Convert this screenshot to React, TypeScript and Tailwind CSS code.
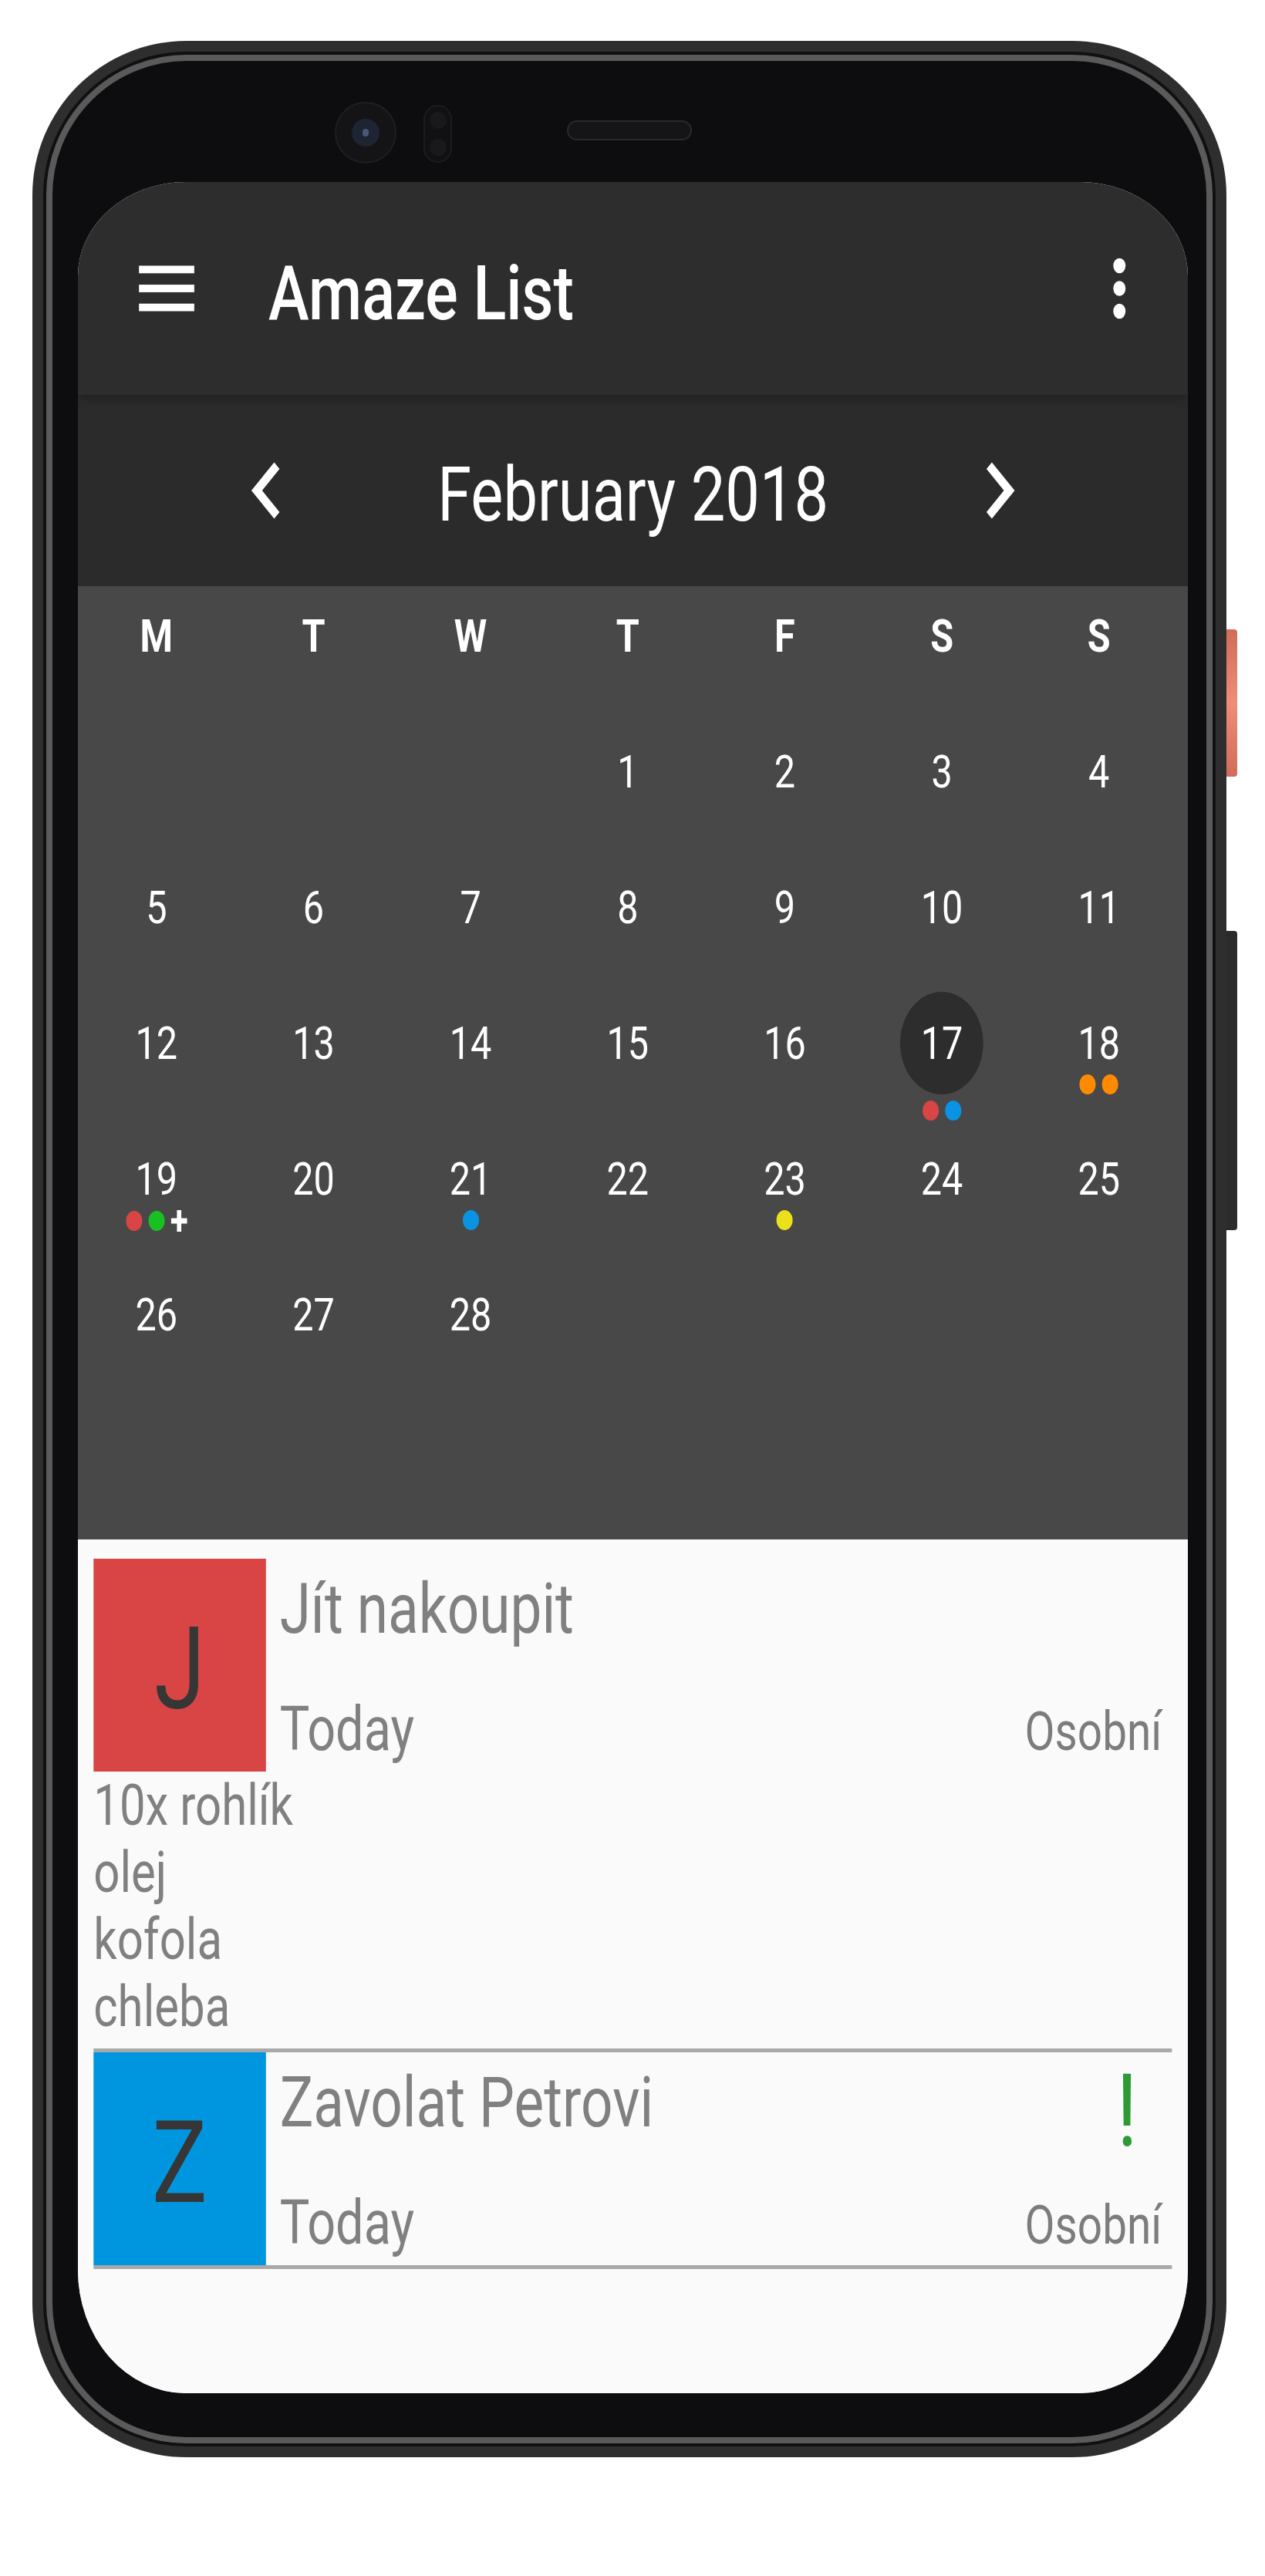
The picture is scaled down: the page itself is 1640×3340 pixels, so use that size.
import React from 'react'

type Day = { n?: number; dots?: string[]; plus?: boolean; selected?: boolean }

const weekdays = ['M', 'T', 'W', 'T', 'F', 'S', 'S']

const days: Day[] = [
  {}, {}, {}, { n: 1 }, { n: 2 }, { n: 3 }, { n: 4 },
  { n: 5 }, { n: 6 }, { n: 7 }, { n: 8 }, { n: 9 }, { n: 10 }, { n: 11 },
  { n: 12 }, { n: 13 }, { n: 14 }, { n: 15 }, { n: 16 },
  { n: 17, selected: true, dots: ['bg-[#d94545]', 'bg-[#0a93e2]'] },
  { n: 18, dots: ['bg-[#ff8a00]', 'bg-[#ff8a00]'] },
  { n: 19, dots: ['bg-[#d94545]', 'bg-[#19c022]'], plus: true },
  { n: 20 },
  { n: 21, dots: ['bg-[#0a93e2]'] },
  { n: 22 },
  { n: 23, dots: ['bg-[#ebe11b]'] },
  { n: 24 }, { n: 25 },
  { n: 26 }, { n: 27 }, { n: 28 }, {}, {}, {}, {},
]

const tasks = [
  {
    letter: 'J',
    square: 'bg-[#d94545]',
    title: 'Jít nakoupit',
    urgent: false,
    notes: ['10x rohlík', 'olej', 'kofola', 'chleba'],
  },
  {
    letter: 'Z',
    square: 'bg-[#0096df]',
    title: 'Zavolat Petrovi',
    urgent: true,
    notes: [],
  },
]

function Chevron({ dir }: { dir: 'left' | 'right' }) {
  return (
    <svg width="146" height="146" viewBox="0 0 24 24" fill="#fff">
      {dir === 'left' ? (
        <path d="M15.41 7.41L14 6l-6 6 6 6 1.41-1.41L10.83 12z" />
      ) : (
        <path d="M8.59 16.59L10 18l6-6-6-6-1.41 1.41L13.17 12z" />
      )}
    </svg>
  )
}

function DayCell({ d }: { d: Day }) {
  if (!d.n) return <div className="h-[176px]" />
  return (
    <div className="flex h-[176px] flex-col items-center">
      {d.selected ? (
        <div className="mt-[21px] flex h-[133px] w-[133px] shrink-0 items-center justify-center rounded-full bg-[#2d2d2d]">
          <span className="text-[60px] leading-none text-white">{d.n}</span>
        </div>
      ) : (
        <span className="mt-[58px] shrink-0 text-[60px] leading-none text-white">{d.n}</span>
      )}
      {d.dots && (
        <div className={`flex shrink-0 items-center gap-[10px] ${d.selected ? 'mt-[8px]' : 'mt-[10px]'}`}>
          {d.dots.map((c, i) => (
            <span key={i} className={`h-[26px] w-[26px] rounded-full ${c}`} />
          ))}
          {d.plus && (
            <svg width="26" height="28" viewBox="0 0 26 28">
              <rect x="0" y="10.5" width="26" height="7" fill="#fff" />
              <rect x="9.5" y="0" width="7" height="28" fill="#fff" />
            </svg>
          )}
        </div>
      )}
    </div>
  )
}

export default function App() {
  return (
    <div className="h-[3340px] w-[1640px] bg-white pl-[42px] pt-[53px]">
      {/* phone frame */}
      <div className="relative h-[3133px] w-[1548px] rounded-[200px] bg-[#2e2e2e] p-[14px]">
        <div className="absolute left-full top-[763px] h-[191px] w-[14px] rounded-r-[4px] bg-linear-to-b from-[#d06c58] via-[#ef8d77] to-[#d06c58]" />
        <div className="absolute left-full top-[1154px] h-[388px] w-[14px] rounded-r-[4px] bg-[#2b2b2b]" />
        <div className="h-full rounded-[186px] bg-[#101012] p-[4px]">
          <div className="h-full rounded-[182px] border-[8px] border-[#5a5a5a] bg-[#0d0d0f]">
            {/* top bezel */}
            <div className="flex h-[157px] items-start pl-[366px]">
              <div className="mt-[53px] flex h-[80px] w-[80px] items-center justify-center rounded-full border-2 border-[#1f1f22] bg-[#141416]">
                <div className="flex h-[36px] w-[36px] items-center justify-center rounded-full bg-[#1e2431]">
                  <div className="h-[10px] w-[8px] rounded-full bg-[#4a5878]" />
                </div>
              </div>
              <div className="ml-[35px] mt-[57px] flex h-[75px] w-[37px] flex-col items-center justify-around rounded-full border-2 border-[#1c1c1e] bg-[#111113]">
                <div className="h-[22px] w-[22px] rounded-full bg-[#19191b]" />
                <div className="h-[22px] w-[22px] rounded-full bg-[#19191b]" />
              </div>
              <div className="ml-[149px] mt-[77px] h-[26px] w-[162px] rounded-full border-2 border-[#2a2a2c] bg-[#151517]" />
            </div>

            {/* screen */}
            <div className="ml-[33px] h-[2867px] w-[1439px] overflow-hidden rounded-t-[140px_122px] rounded-b-[140px_160px] bg-[#fafafa]">
              <div className="flex h-full w-[1777px] origin-left scale-x-[0.81] flex-col font-['Roboto',sans-serif]">
                {/* app bar */}
                <div className="relative z-10 flex h-[276px] shrink-0 items-center bg-[#2d2d2d] pl-[83px] shadow-[0_6px_12px_rgba(0,0,0,0.22)]">
                  <svg width="118" height="118" viewBox="0 0 24 24" fill="#fff">
                    <rect x="3" y="6" width="18" height="2" />
                    <rect x="3" y="11" width="18" height="2" />
                    <rect x="3" y="16" width="18" height="2" />
                  </svg>
                  <span className="ml-[104px] mt-[13px] whitespace-nowrap text-[98px] font-medium leading-none text-white">Amaze List</span>
                  <svg className="ml-auto mr-[51px]" width="118" height="118" viewBox="0 0 24 24" fill="#fff">
                    <circle cx="12" cy="6" r="2" />
                    <circle cx="12" cy="12" r="2" />
                    <circle cx="12" cy="18" r="2" />
                  </svg>
                </div>

                {/* month header */}
                <div className="flex h-[248px] shrink-0 items-center justify-between bg-[#2b2b2b] px-[229px]">
                  <Chevron dir="left" />
                  <span className="mt-[12px] whitespace-nowrap text-[98px] leading-none text-white">February 2018</span>
                  <Chevron dir="right" />
                </div>

                {/* calendar */}
                <div className="h-[1236px] shrink-0 bg-[#484848] pr-[17px]">
                  <div className="grid h-[130px] grid-cols-7 items-center">
                    {weekdays.map((w, i) => (
                      <span key={i} className="text-center text-[60px] font-bold leading-none text-white">{w}</span>
                    ))}
                  </div>
                  <div className="mt-[23px] grid grid-cols-7">
                    {days.map((d, i) => (
                      <DayCell key={i} d={d} />
                    ))}
                  </div>
                </div>

                {/* task list */}
                <div className="flex-1 bg-[#fafafa] pl-[25px] pr-[26px] pt-[25px]">
                  {tasks.map((t, i) => (
                    <div key={i} className={`border-b-[5px] border-[#a9a9a9] ${t.notes.length ? 'pb-[11px]' : ''}`}>
                      <div className="flex h-[276px]">
                        <div className={`flex h-[276px] w-[276px] shrink-0 items-center justify-center pt-[11px] ${t.square}`}>
                          <span className="text-[148px] leading-none text-[#363636]">{t.letter}</span>
                        </div>
                        <div className="flex flex-1 flex-col pl-[22px]">
                          <div className="flex items-start justify-between">
                            <span className="mt-[21px] whitespace-nowrap text-[90px] leading-none text-[#808080]">{t.title}</span>
                            {t.urgent && (
                              <span className="mr-[55px] mt-[10px] text-[132px] leading-none text-[#2c9a35]">!</span>
                            )}
                          </div>
                          <div className="mt-auto flex items-baseline justify-between pb-[15px] pr-[16px]">
                            <span className="text-[80px] leading-none text-[#808080]">Today</span>
                            <span className="text-[70px] leading-none text-[#7c7c7c]">Osobní</span>
                          </div>
                        </div>
                      </div>
                      {t.notes.map((n, j) => (
                        <div key={j} className="whitespace-nowrap text-[74px] leading-[87px] text-[#808080]">{n}</div>
                      ))}
                    </div>
                  ))}
                </div>
              </div>
            </div>
          </div>
        </div>
      </div>
    </div>
  )
}
